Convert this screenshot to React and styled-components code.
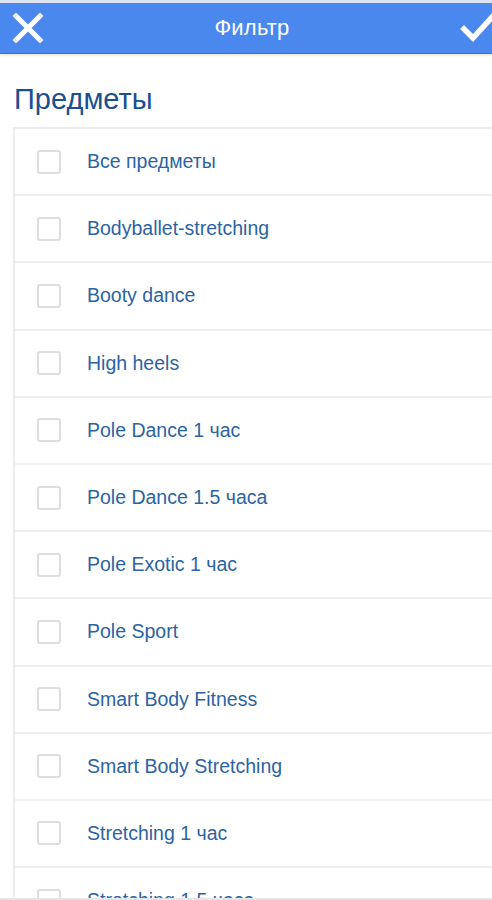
import React from 'react';
import styled, { createGlobalStyle } from 'styled-components';

const GlobalStyle = createGlobalStyle`
  html, body {
    margin: 0;
    padding: 0;
    background: #fff;
  }
  body {
    font-family: "Liberation Sans", Arial, sans-serif;
  }
`;

const Screen = styled.div`
  width: 492px;
  height: 900px;
  overflow: hidden;
  display: flex;
  flex-direction: column;
  background: #fff;
  border-top: 3px solid #dce4f1;
  border-bottom: 2px solid #e6e6e6;
  box-sizing: border-box;
`;

const Toolbar = styled.header`
  height: 50px;
  flex-shrink: 0;
  background: #4a88ee;
  border-bottom: 1px solid #3a72d0;
  box-shadow: 0 2px 2px rgba(0, 0, 0, 0.08);
  display: flex;
  align-items: center;
  justify-content: space-between;
`;

const IconButton = styled.button`
  background: none;
  border: none;
  padding: 0;
  width: 56px;
  height: 50px;
  display: flex;
  align-items: center;
  justify-content: ${({ align }) => (align === 'right' ? 'flex-end' : 'flex-start')};
  padding-left: ${({ align }) => (align === 'right' ? '0' : '13px')};
  margin-right: ${({ align }) => (align === 'right' ? '-6px' : '0')};
  cursor: pointer;
  box-sizing: border-box;
`;

const ToolbarTitle = styled.h1`
  margin: 0 0 0 6px;
  font-size: 22px;
  font-weight: normal;
  color: #fff;
  letter-spacing: 0.2px;
`;

const Body = styled.main`
  flex: 1;
  display: flex;
  flex-direction: column;
  padding-left: 13px;
  overflow: hidden;
`;

const SectionTitle = styled.h2`
  margin: 0;
  padding: 28px 0 11px 1px;
  font-size: 29px;
  font-weight: normal;
  color: #1b4f8f;
  line-height: 34px;
`;

const List = styled.ul`
  list-style: none;
  margin: 0;
  padding: 0;
  border-top: 2px solid #ececec;
  border-left: 2px solid #ececec;
  flex: 1;
  overflow: hidden;
`;

const Row = styled.li`
  height: 67.2px;
  box-sizing: border-box;
  border-bottom: 2px solid #efefef;
  display: flex;
  align-items: center;
  padding-left: 22px;
`;

const Checkbox = styled.span`
  width: 24px;
  height: 24px;
  box-sizing: border-box;
  border: 2px solid #dedede;
  border-radius: 3px;
  background: #fff;
  flex-shrink: 0;
`;

const Label = styled.span`
  margin-left: 26px;
  font-size: 19.5px;
  color: #2c64a3;
  white-space: nowrap;
`;

const subjects = [
  'Все предметы',
  'Bodyballet-stretching',
  'Booty dance',
  'High heels',
  'Pole Dance 1 час',
  'Pole Dance 1.5 часа',
  'Pole Exotic 1 час',
  'Pole Sport',
  'Smart Body Fitness',
  'Smart Body Stretching',
  'Stretching 1 час',
  'Stretching 1.5 часа',
];

const App = () => (
  <>
    <GlobalStyle />
    <Screen>
      <Toolbar>
        <IconButton aria-label="Закрыть">
          <svg width="30" height="30" viewBox="0 0 30 30">
            <path d="M3 3 L27 27 M27 3 L3 27" stroke="#fff" strokeWidth="5" strokeLinecap="square" />
          </svg>
        </IconButton>
        <ToolbarTitle>Фильтр</ToolbarTitle>
        <IconButton align="right" aria-label="Применить">
          <svg width="38" height="32" viewBox="0 0 38 32">
            <path d="M4 17 L13 26 L34 3" stroke="#fff" strokeWidth="5.5" fill="none" strokeLinecap="square" strokeLinejoin="miter" />
          </svg>
        </IconButton>
      </Toolbar>
      <Body>
        <SectionTitle>Предметы</SectionTitle>
        <List>
          {subjects.map((name) => (
            <Row key={name}>
              <Checkbox />
              <Label>{name}</Label>
            </Row>
          ))}
        </List>
      </Body>
    </Screen>
  </>
);

export default App;
